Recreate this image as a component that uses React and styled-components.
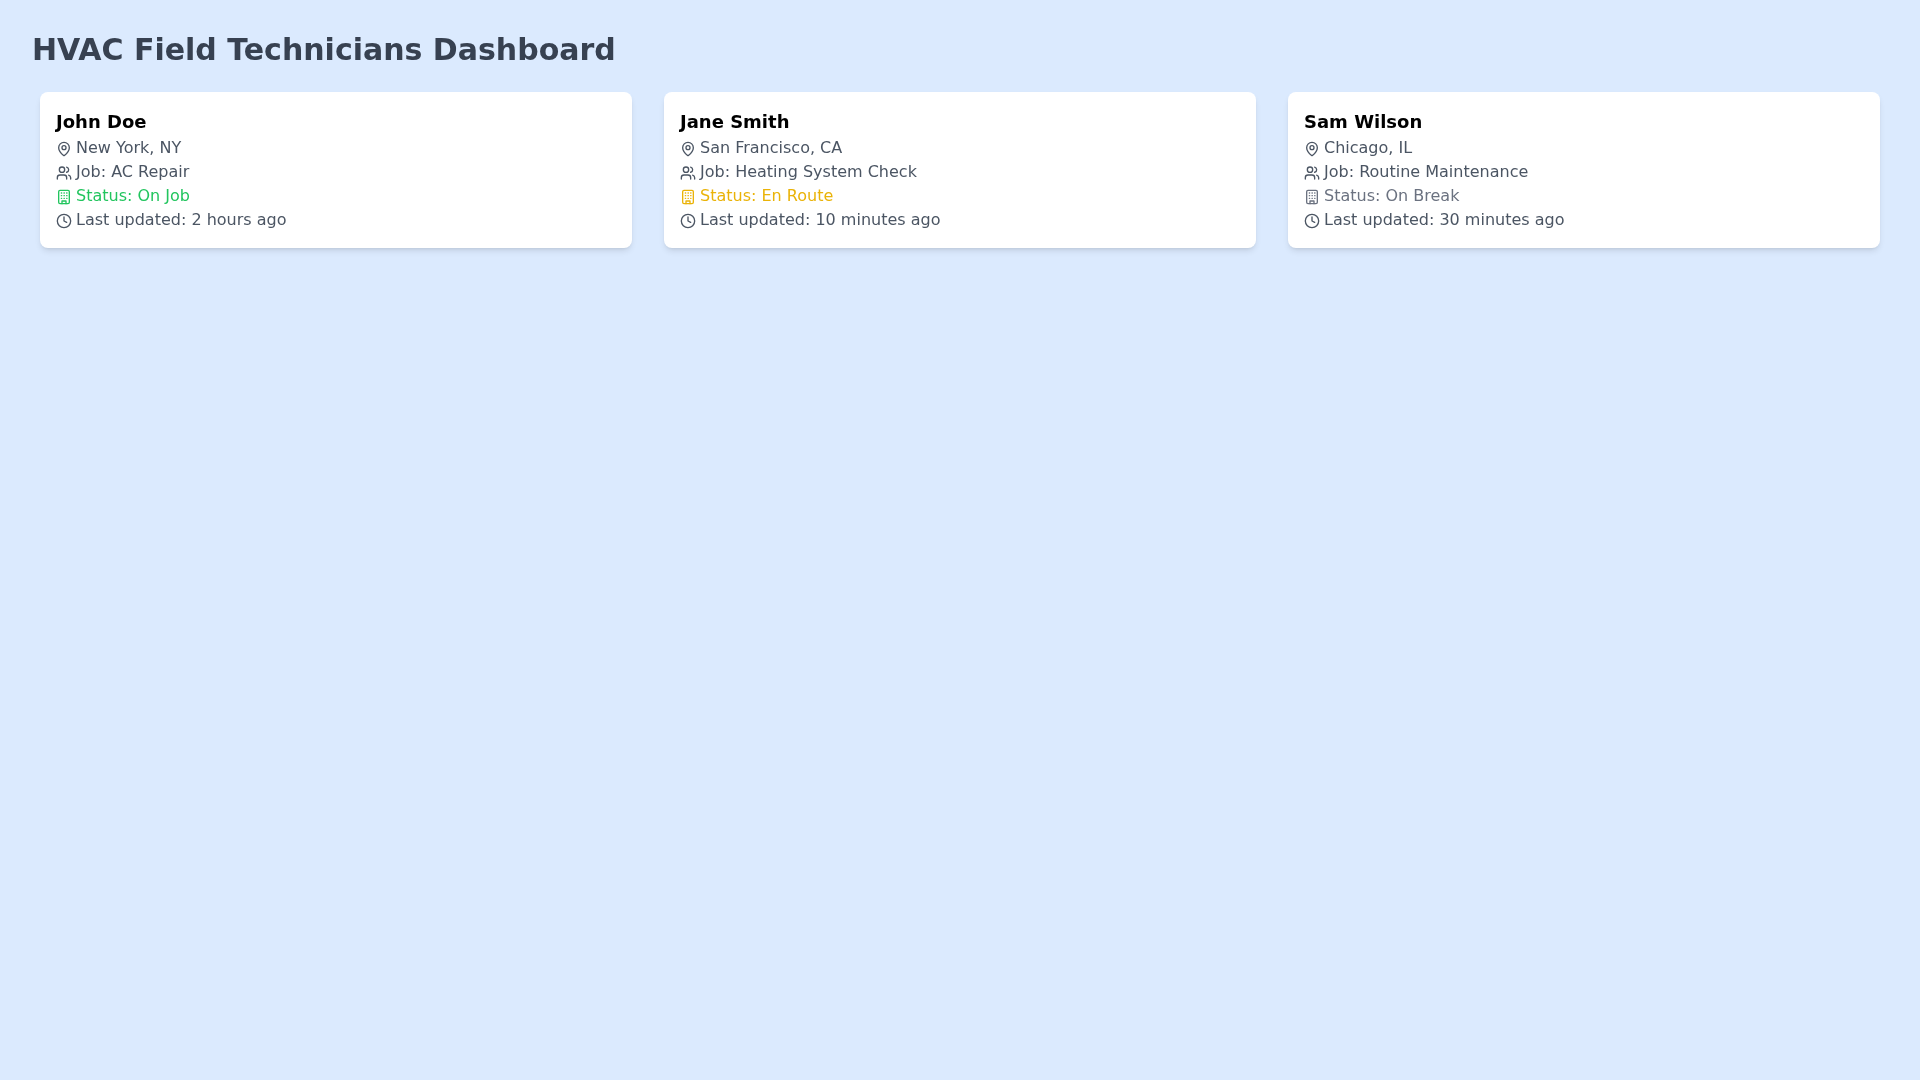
import React from 'react'
import styled, { createGlobalStyle } from 'styled-components'
import { MapPin, Users, Clock } from 'lucide-react'

const GlobalStyle = createGlobalStyle`
  * {
    box-sizing: border-box;
  }
  body {
    margin: 0;
    background-color: #dbeafe;
    font-family: "DejaVu Sans", sans-serif;
  }
`
const Page = styled.div`
  min-height: 100vh;
  padding: 32px;
  background-color: #dbeafe;
`
const Title = styled.h1`
  margin: 0 0 24px 0;
  font-size: 30px;
  line-height: 36px;
  font-weight: 700;
  color: #374151;
  will-change: opacity;
`
const CardGrid = styled.div`
  display: grid;
  grid-template-columns: repeat(3, 1fr);
  gap: 32px;
  padding: 0 8px;
  will-change: opacity;
`
const Card = styled.div`
  padding: 16px;
  background-color: white;
  border-radius: 8px;
  box-shadow: 0 4px 6px -1px rgba(0, 0, 0, 0.1), 0 2px 4px -2px rgba(0, 0, 0, 0.1);
`
const Name = styled.h2`
  margin: 0;
  font-size: 18px;
  line-height: 28px;
  font-weight: 700;
  color: black;
`
const Line = styled.p`
  margin: 0;
  font-size: 16px;
  line-height: 24px;
  color: ${props => props.$color || '#4b5563'};

  svg {
    display: inline-block;
    margin-right: 4px;
    vertical-align: baseline;
    margin-bottom: -4px;
  }
`

// older lucide building with its square door, dots a bit wider so the grid shows at 16px
const BuildingIco = () => (
  <svg width="16" height="16" viewBox="0 0 24 24" fill="none" stroke="currentColor" strokeWidth="2" strokeLinecap="round" strokeLinejoin="round">
    <rect width="16" height="20" x="4" y="2" rx="2" ry="2" />
    <path d="M9 22v-4h6v4" />
    <path d="M8 6h.5M12 6h.5M16 6h.5" />
    <path d="M8 10h.5M12 10h.5M16 10h.5" />
    <path d="M8 14h.5M12 14h.5M16 14h.5" />
  </svg>
)

const technicians = [
  { name: 'John Doe', location: 'New York, NY', job: 'AC Repair', status: 'On Job', color: '#22c55e', updated: '2 hours ago' },
  { name: 'Jane Smith', location: 'San Francisco, CA', job: 'Heating System Check', status: 'En Route', color: '#eab308', updated: '10 minutes ago' },
  { name: 'Sam Wilson', location: 'Chicago, IL', job: 'Routine Maintenance', status: 'On Break', color: '#6b7280', updated: '30 minutes ago' },
]

const App = () => {
  return (
    <>
      <GlobalStyle />
      <Page>
        <Title>HVAC Field Technicians Dashboard</Title>
        <CardGrid>
          {technicians.map(tech => (
            <Card key={tech.name}>
              <Name>{tech.name}</Name>
              <Line><MapPin size={16} />{tech.location}</Line>
              <Line><Users size={16} />Job: {tech.job}</Line>
              <Line $color={tech.color}><BuildingIco />Status: {tech.status}</Line>
              <Line><Clock size={16} />Last updated: {tech.updated}</Line>
            </Card>
          ))}
        </CardGrid>
      </Page>
    </>
  )
}

export default App
